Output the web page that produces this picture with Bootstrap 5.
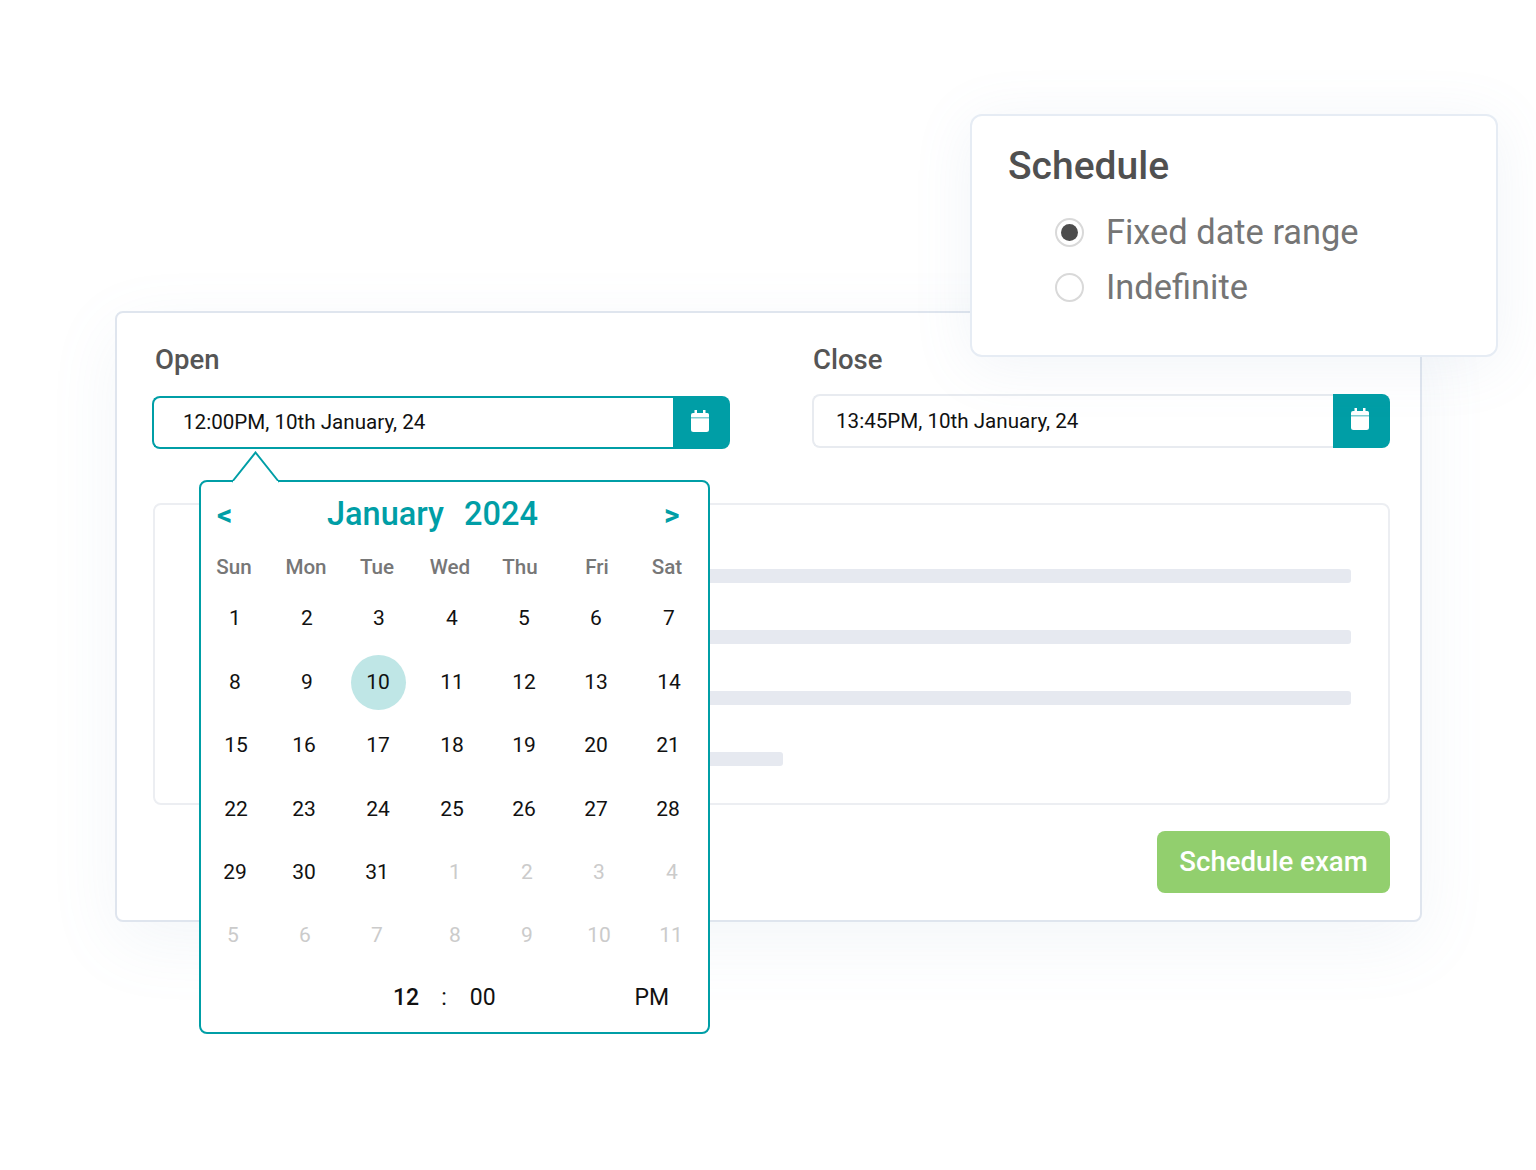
<!DOCTYPE html>
<html lang="en">
<head>
<meta charset="utf-8">
<title>Schedule exam</title>
<link href="https://cdn.jsdelivr.net/npm/bootstrap@5.3.0/dist/css/bootstrap.min.css" rel="stylesheet">
<style>
html,body{background:#fff;margin:0;height:1170px;overflow:hidden;font-family:Roboto,"Liberation Sans",sans-serif}
.stage{position:relative;width:1536px;height:1170px;padding:311px 114px 0 115px}
.exam-win{height:611px;border:2px solid #dfe5ee;border-radius:8px;background:#fff;box-shadow:0 20px 70px rgba(120,150,190,.09);padding:31px 30px 0 36px}
.field-label{font-size:27.5px;line-height:32px;font-weight:500;color:#555;margin:0}
.field-label.first{margin-left:2px}
.fields{gap:83px;height:159px}
.field{width:577px}
.date-box{height:54px;margin-top:18px;margin-left:-1px;border:2px solid #e8ebf0;border-right:0;border-radius:8px 0 0 8px;font-size:20.6px;color:#111;padding-left:22px;background:#fff}
.date-box.on{height:53px;margin-top:20px;border-color:#009ea6;padding-left:29px}
.cal-btn{width:57px;height:54px;margin-top:18px;background:#009ea6;border-radius:0 8px 8px 0}
.cal-btn.on{height:53px;margin-top:20px}
.cal-btn svg{width:18px;height:22px;margin:-4px 4px 0 0}
.grey-box{height:302px;border:2px solid #eceef2;border-radius:8px;padding:64px 37px 0 100px}
.bar{height:14px;background:#e6e9f0;border-radius:3px;margin-bottom:47px}
.bar.short{width:528px}
.green-btn{width:233px;height:62px;background:#92cf6e;color:#fff;border:0;border-radius:8px;font-size:27.6px;font-weight:500;margin-top:26px;padding:0}
.sched-win{position:absolute;left:970px;top:114px;width:528px;height:243px;background:#fff;border:2px solid #e6ecf4;border-radius:12px;box-shadow:0 8px 60px rgba(120,150,190,.1);padding:27px 36px}
.sched-win h2{font-size:39px;line-height:46px;font-weight:500;color:#505050;margin:0 0 16px}
.opt{height:55px;padding-left:47px;gap:22px;font-size:34.4px;color:#757575}
.dot{width:29px;height:29px;border:2px solid #d9d9d9;border-radius:50%;background:#fff;padding:4px}
.dot i{width:100%;height:100%;display:block;border-radius:50%;background:#4d4d4d}
.pop{position:absolute;left:199px;top:480px;width:511px;height:554px;background:#fff;border:2px solid #009ea6;border-radius:8px;padding:0}
.pop-tip{position:absolute;left:30px;top:-31px;width:50px;height:32px;display:block}
.pop-head{height:66px;padding:0 26px 0 16px;color:#009ea6;font-size:32.5px;font-weight:500}
.pop-arrow{font-size:30px;font-weight:700;width:18px;line-height:1}
.pop-title{flex:1;text-align:center;word-spacing:12px;padding-right:34px;margin-top:-2px}
.cal-row{display:grid;align-items:center;text-align:center;font-size:21px;color:#111}
.wk{height:40px;font-size:20.6px;font-weight:500;color:#777;grid-template-columns:66px 78px 64px 82px 58px 96px 44px;margin:-1px 0 .5px}
.rw{height:63.4px;grid-template-columns:68px 76px 68px 78px 66px 78px 68px}
.rw3{grid-template-columns:70px 66px 82px 66px 78px 66px 78px}
.rw5{grid-template-columns:68px 70px 76px 80px 64px 80px 66px}
.rw6{grid-template-columns:64px 80px 64px 92px 52px 92px 52px}
.muted-day{color:#cbcbcb}
.today{width:55px;height:55px;margin-left:-2px;border-radius:50%;background:#bfe6e6;display:flex;align-items:center;justify-content:center;justify-self:center}
.pop-time{font-size:23px;color:#111;height:60px;padding:0 39px 0 192px}
.pop-time b{font-weight:500}
.pop-colon{margin:0 23px 0 22px}
</style>
</head>
<body>
<div class="stage">
  <div class="exam-win">
    <div class="d-flex fields">
      <div class="field">
        <p class="field-label first">Open</p>
        <div class="d-flex">
          <div class="date-box on flex-grow-1 d-flex align-items-center">12:00PM, 10th January, 24</div>
          <div class="cal-btn on d-flex align-items-center justify-content-center"><svg viewBox="0 0 18 22"><path fill="#fff" d="M3.500 0h2.500v3h6V0h2.500v3h1A2 2 0 0 1 18 5v2.600H0V5a2 2 0 0 1 2-2h1.500ZM0 8.300h18V19.500a2.500 2.500 0 0 1-2.500 2.500h-13A2.500 2.500 0 0 1 0 19.500Z"/></svg></div>
        </div>
      </div>
      <div class="field">
        <p class="field-label">Close</p>
        <div class="d-flex">
          <div class="date-box flex-grow-1 d-flex align-items-center">13:45PM, 10th January, 24</div>
          <div class="cal-btn d-flex align-items-center justify-content-center"><svg viewBox="0 0 18 22"><path fill="#fff" d="M3.500 0h2.500v3h6V0h2.500v3h1A2 2 0 0 1 18 5v2.600H0V5a2 2 0 0 1 2-2h1.500ZM0 8.300h18V19.500a2.500 2.500 0 0 1-2.500 2.500h-13A2.500 2.500 0 0 1 0 19.500Z"/></svg></div>
        </div>
      </div>
    </div>
    <div class="grey-box">
      <div class="bar"></div>
      <div class="bar"></div>
      <div class="bar"></div>
      <div class="bar short"></div>
    </div>
    <div class="d-flex justify-content-end"><button class="btn green-btn">Schedule exam</button></div>
  </div>

  <div class="sched-win">
    <h2>Schedule</h2>
    <div class="opt d-flex align-items-center"><span class="dot"><i></i></span>Fixed date range</div>
    <div class="opt d-flex align-items-center"><span class="dot"></span>Indefinite</div>
  </div>

  <div class="pop">
    <svg class="pop-tip" viewBox="0 0 50 32"><path d="M1 31 24.500 1.500 48 31" fill="#fff" stroke="#009ea6" stroke-width="2"/><rect x="2" y="30" width="45" height="3" fill="#fff"/></svg>
    <div class="pop-head d-flex align-items-center">
      <span class="pop-arrow">&lt;</span>
      <span class="pop-title">January 2024</span>
      <span class="pop-arrow">&gt;</span>
    </div>
    <div class="cal-row wk"><span>Sun</span><span>Mon</span><span>Tue</span><span>Wed</span><span>Thu</span><span>Fri</span><span>Sat</span></div>
    <div class="cal-row rw"><span>1</span><span>2</span><span>3</span><span>4</span><span>5</span><span>6</span><span>7</span></div>
    <div class="cal-row rw"><span>8</span><span>9</span><span class="today">10</span><span>11</span><span>12</span><span>13</span><span>14</span></div>
    <div class="cal-row rw rw3"><span>15</span><span>16</span><span>17</span><span>18</span><span>19</span><span>20</span><span>21</span></div>
    <div class="cal-row rw rw3"><span>22</span><span>23</span><span>24</span><span>25</span><span>26</span><span>27</span><span>28</span></div>
    <div class="cal-row rw rw5"><span>29</span><span>30</span><span>31</span><span class="muted-day">1</span><span class="muted-day">2</span><span class="muted-day">3</span><span class="muted-day">4</span></div>
    <div class="cal-row rw rw6"><span class="muted-day">5</span><span class="muted-day">6</span><span class="muted-day">7</span><span class="muted-day">8</span><span class="muted-day">9</span><span class="muted-day">10</span><span class="muted-day">11</span></div>
    <div class="pop-time d-flex align-items-center"><b>12</b><span class="pop-colon">:</span><span>00</span><span class="ms-auto">PM</span></div>
  </div>
</div>
<script src="https://cdn.jsdelivr.net/npm/bootstrap@5.3.0/dist/js/bootstrap.bundle.min.js"></script>
</body>
</html>
